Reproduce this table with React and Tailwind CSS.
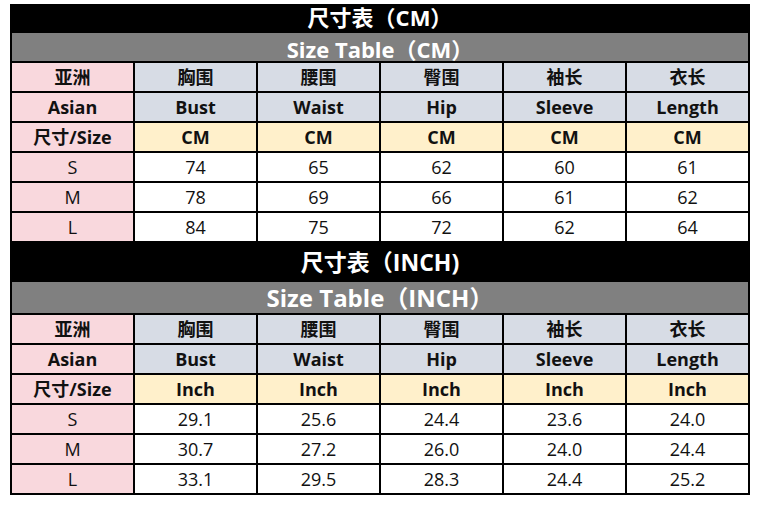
const FONT = { fontFamily: '"Open Sans", "Noto Sans CJK SC", sans-serif' };

const HEAD_CN = ["胸围", "腰围", "臀围", "袖长", "衣长"];
const HEAD_EN = ["Bust", "Waist", "Hip", "Sleeve", "Length"];

// header bands are tight in the first table, so the text is nudged apart a little
const TABLES = [
  {
    title: "尺寸表（CM）",
    sub: "Size Table（CM）",
    unit: "CM",
    titleCls: "h-[27px] pb-[6px] text-[22px]",
    subCls: "h-[28px] pt-[3px] text-[22px]",
    rows: [
      ["S", "74", "65", "62", "60", "61"],
      ["M", "78", "69", "66", "61", "62"],
      ["L", "84", "75", "72", "62", "64"],
    ],
  },
  {
    title: "尺寸表（INCH)",
    sub: "Size Table（INCH）",
    unit: "Inch",
    titleCls: "h-[39px] text-[23px]",
    subCls: "h-[31px] text-[24px]",
    rows: [
      ["S", "29.1", "25.6", "24.4", "23.6", "24.0"],
      ["M", "30.7", "27.2", "26.0", "24.0", "24.4"],
      ["L", "33.1", "29.5", "28.3", "24.4", "25.2"],
    ],
  },
];

function Cell({ bg, bold, children }) {
  return (
    <div
      className={`flex h-[28px] items-center justify-center text-[18px] leading-none text-[#111] ${bg} ${
        bold ? "font-bold" : "font-normal"
      }`}
    >
      {children}
    </div>
  );
}

function SizeSection({ table, last }) {
  return (
    <>
      <div
        className={`flex ${table.titleCls} items-center justify-center bg-black leading-none font-bold text-white`}
      >
        {table.title}
      </div>
      <div
        className={`flex ${table.subCls} items-center justify-center bg-[#808080] leading-none font-bold text-white`}
      >
        {table.sub}
      </div>
      <div
        className={`grid grid-cols-[repeat(6,121px)] gap-[2px] bg-black pt-[2px] ${last ? "" : "pb-[2px]"}`}
      >
        <Cell bg="bg-[#f9d8dd]" bold>亚洲</Cell>
        {HEAD_CN.map((h) => (
          <Cell key={h} bg="bg-[#d7dce5]" bold>{h}</Cell>
        ))}
        <Cell bg="bg-[#f9d8dd]" bold>Asian</Cell>
        {HEAD_EN.map((h) => (
          <Cell key={h} bg="bg-[#d7dce5]" bold>{h}</Cell>
        ))}
        <Cell bg="bg-[#f9d8dd]" bold>尺寸/Size</Cell>
        {HEAD_EN.map((h) => (
          <Cell key={h} bg="bg-[#fff0cb]" bold>{table.unit}</Cell>
        ))}
        {table.rows.map((row) =>
          row.map((v, i) => (
            <Cell key={row[0] + i} bg={i === 0 ? "bg-[#f9d8dd]" : "bg-white"}>
              {v}
            </Cell>
          ))
        )}
      </div>
    </>
  );
}

export default function App() {
  return (
    <div className="h-[506px] w-[760px] bg-white pt-[4px]" style={FONT}>
      <div className="ml-[10px] flex w-[740px] flex-col border-2 border-black">
        {TABLES.map((t, i) => (
          <SizeSection key={t.unit} table={t} last={i === TABLES.length - 1} />
        ))}
      </div>
    </div>
  );
}
